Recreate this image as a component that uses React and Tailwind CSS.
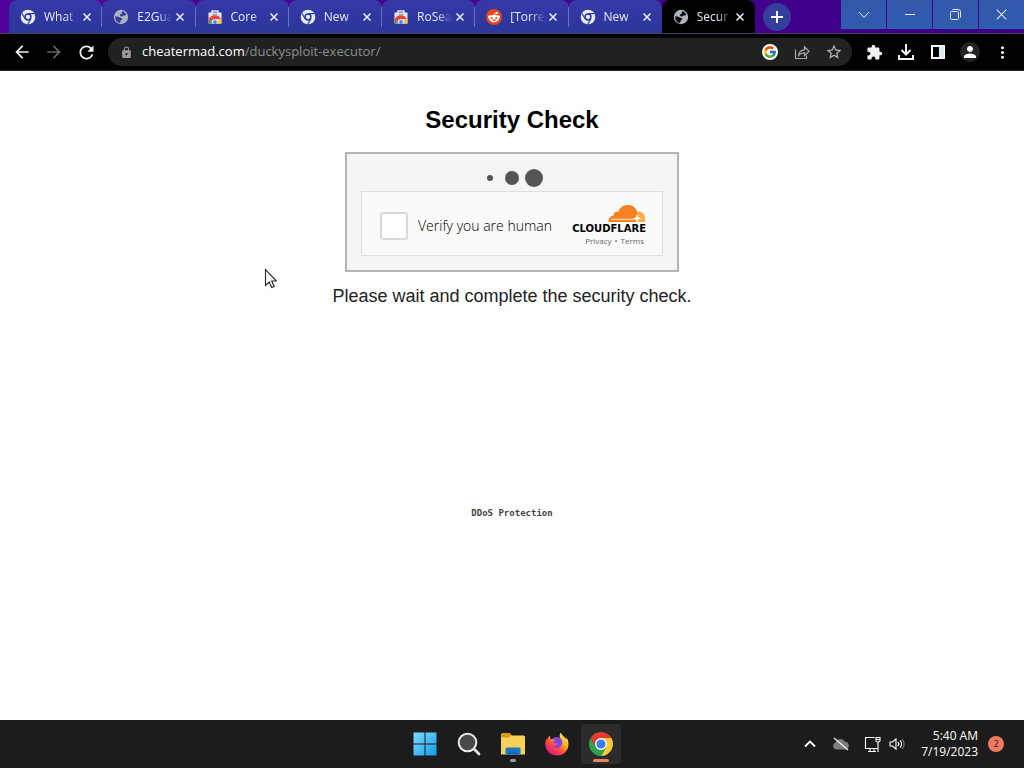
import React from "react";
import { FaRedditAlien } from "react-icons/fa6";
import { FcGoogle } from "react-icons/fc";
import {
  MdArrowBack,
  MdArrowForward,
  MdExtension,
  MdLock,
  MdMoreVert,
  MdPerson,
  MdRefresh,
  MdStarBorder,
} from "react-icons/md";

const UI = "font-['Open_Sans','Noto_Sans',sans-serif]";

function StoreIcon() {
  return (
    <svg width="16" height="16" viewBox="0 0 16 16">
      <path d="M5 4.500V2h6v2.500" fill="none" stroke="#dfe5f2" strokeWidth="1.500" />
      <path d="M1.500 3.500h13v11h-13z" fill="#e6e9f0" />
      <path d="M4 14.500V12a4 4 0 0 1 8 0v2.500z" fill="#f4f4f4" />
      <path d="M1.500 14.500V12A6.500 6.500 0 0 1 14 10.300H8A3.500 3.500 0 0 0 4.600 12z" fill="#e5483a" />
      <path d="M1.500 12.500v2h4L4 11z" fill="#43a563" />
      <path d="M14.500 11v3.500H10L11.500 11z" fill="#fbc02d" />
      <circle cx="8" cy="13" r="1.900" fill="#4285f4" />
      <path d="M5.500 5.500h5" stroke="#8f9cb8" />
    </svg>
  );
}

function ChromeMark() {
  return (
    <svg width="16" height="16" viewBox="0 0 16 16">
      <circle cx="8" cy="8" r="7.300" fill="#e6ecfc" />
      <path d="M8 4.600h6.500M5 9.700L1.900 4.300M11 9.700L7.800 15" stroke="#3038a0" strokeWidth="1.200" />
      <circle cx="8" cy="8" r="2.900" fill="#e6ecfc" stroke="#3038a0" strokeWidth="1.500" />
    </svg>
  );
}

function GlobeMark({ dark }) {
  const land = dark ? "#08080a" : "#343ba0";
  return (
    <svg width="16" height="16" viewBox="0 0 16 16">
      <circle cx="8" cy="8" r="7.200" fill="#adb2bd" />
      <path
        d="M9 2.200c1.300.2 3.600 1.600 4.300 3.500-1 .9-2.600.4-3.500 1.300-.9.800-2.300.5-2.800-.4-.4-.9.400-1.500 1.300-1.700.9-.3.500-1.800.7-2.700z"
        fill={land}
      />
      <path
        d="M2.200 7.200c1.700.2 2.900.3 3.900 1.100.8.700 2.300.300 2.900 1.300.5 1-.7 1.600-1.300 2.200-.5.600-.2 1.500-.9 2.200C4 13.300 2 11 2.200 7.200z"
        fill={land}
      />
    </svg>
  );
}

function TabIcon({ kind, dark }) {
  if (kind === "chrome") return <ChromeMark />;
  if (kind === "globe") return <GlobeMark dark={dark} />;
  if (kind === "store") return <StoreIcon />;
  return (
    <span className="flex size-4 items-center justify-center rounded-full bg-[#f0441c]">
      <FaRedditAlien size={12} className="text-white" />
    </span>
  );
}

function Cross({ size = 8, width = 1.5 }) {
  return (
    <svg width={size} height={size} viewBox="0 0 8 8" aria-hidden="true">
      <path d="M.5.5l7 7M7.500.5l-7 7" stroke="currentColor" strokeWidth={width} />
    </svg>
  );
}

const tabs = [
  { title: "What", icon: "chrome" },
  { title: "E2Gua", icon: "globe" },
  { title: "Core", icon: "store" },
  { title: "New", icon: "chrome" },
  { title: "RoSea", icon: "store" },
  { title: "[Torre", icon: "reddit" },
  { title: "New", icon: "chrome" },
  { title: "Secur", icon: "globe", active: true },
];

function Tab({ title, icon, active, divider }) {
  return (
    <div
      className={
        "flex h-full min-w-0 flex-1 items-center rounded-t-lg " +
        (active ? "bg-black" : "bg-linear-to-b from-[#3638a8] to-[#2b3799]")
      }
    >
      <button role="tab" aria-selected={!!active} className="flex items-center pl-[11px]">
        <span className="flex w-4 shrink-0 justify-center">
          <TabIcon kind={icon} dark={active} />
        </span>
        <span className="ml-2 w-[35px] text-left text-xs whitespace-nowrap text-[#e6eafa] mask-r-from-60%">
          {title}
        </span>
      </button>
      <button aria-label={"Close " + title} className="flex size-4 shrink-0 items-center justify-center text-[#eef1fc]">
        <Cross />
      </button>
      {divider && <span className="ml-auto h-5 w-px bg-[#6670c4]" />}
    </div>
  );
}

function WindowButton({ label, children }) {
  return (
    <button aria-label={label} className="flex h-[29px] w-[45px] items-center justify-center bg-linear-to-b from-[#3457ac] to-[#2e5cae] text-[#dfe8fb]">
      {children}
    </button>
  );
}

function TabStrip() {
  return (
    <div className="flex h-[34px] items-start border-b border-[#45405c] bg-linear-to-r from-[#51009a] to-[#3c0085]">
      <div role="tablist" className="ml-[9px] flex h-full w-[746px] min-w-0">
        {tabs.map((t, i) => (
          <Tab key={i} {...t} divider={i < 6} />
        ))}
      </div>
      <button aria-label="New tab" className="mt-[3px] ml-2 flex size-7 shrink-0 items-center justify-center rounded-full bg-[#343e9f]">
        <svg width="12" height="12" viewBox="0 0 12 12">
          <path d="M6 0v12M0 6h12" stroke="#fff" strokeWidth="2" />
        </svg>
      </button>
      <div className="ml-auto flex gap-px">
        <WindowButton label="Search tabs">
          <svg width="12" height="8" viewBox="0 0 12 8" fill="none" stroke="currentColor">
            <path d="M1 1l5 5.500L11 1" />
          </svg>
        </WindowButton>
        <WindowButton label="Minimize">
          <svg width="10" height="3" viewBox="0 0 10 3">
            <path d="M0 1.500h10" stroke="currentColor" />
          </svg>
        </WindowButton>
        <WindowButton label="Restore">
          <svg width="11" height="11" viewBox="0 0 11 11" fill="none" stroke="currentColor">
            <rect x=".5" y="2.500" width="8" height="8" rx="1" />
            <path d="M2.500.5h6a2 2 0 0 1 2 2v6" />
          </svg>
        </WindowButton>
        <WindowButton label="Close window">
          <Cross size={11} width={0.8} />
        </WindowButton>
      </div>
    </div>
  );
}

function IconButton({ label, tone = "text-[#f1f1f1]", children }) {
  return (
    <button aria-label={label} className={"flex w-8 shrink-0 items-center justify-center " + tone}>
      {children}
    </button>
  );
}

function Toolbar() {
  return (
    <div className="flex h-[37px] items-center border-b border-[#2c2828] bg-black pr-1.5 pl-1.5">
      <IconButton label="Back"><MdArrowBack size={20} /></IconButton>
      <IconButton label="Forward" tone="text-[#666666]"><MdArrowForward size={20} /></IconButton>
      <IconButton label="Reload"><MdRefresh size={21} /></IconButton>
      <div className="ml-1.5 flex h-7 min-w-0 flex-1 items-center rounded-full bg-[#202221] pr-0.5 pl-3">
        <MdLock size={13} className="shrink-0 text-[#9a9b9b]" />
        <label className="ml-[9px] flex min-w-0 flex-1 text-[13px] whitespace-nowrap">
          <span className="text-white">cheatermad.com</span>
          <input aria-label="Address path" className="min-w-0 flex-1 bg-transparent text-[#8c8e8d] outline-none" defaultValue="/duckysploit-executor/" />
        </label>
        <IconButton label="Search with Google">
          <span className="flex size-4 items-center justify-center rounded-full bg-white"><FcGoogle size={14} /></span>
        </IconButton>
        <IconButton label="Share">
          <svg width="16" height="15" viewBox="0 0 16 15" fill="none" stroke="#a9abaa" strokeWidth="1.200">
            <path d="M1.500 4.500v9h11v-3M4.500 10.500C4.800 7 7 5 10.500 4.800V2L15 6.300l-4.500 4.200V7.800C7.500 7.800 6 8.500 4.500 10.500z" />
          </svg>
        </IconButton>
        <IconButton label="Bookmark" tone="text-[#b7b9b8]"><MdStarBorder size={18} /></IconButton>
      </div>
      <div className="ml-1.5 flex">
        <IconButton label="Extensions"><MdExtension size={17} /></IconButton>
        <IconButton label="Downloads">
          <svg width="18" height="18" viewBox="0 0 18 18" fill="none" stroke="currentColor" strokeWidth="2">
            <path d="M9 1v10M4.500 7L9 11.500 13.500 7M2 12v4h14v-4" />
          </svg>
        </IconButton>
        <IconButton label="Side panel">
          <svg width="14" height="14" viewBox="0 0 14 14">
            <path d="M1 1h12v12H1z" fill="none" stroke="#fff" strokeWidth="2" />
            <path d="M8 1h5v12H8z" fill="#dfeaf0" />
          </svg>
        </IconButton>
        <IconButton label="Profile">
          <span className="flex size-5 items-center justify-center rounded-full bg-[#242424]"><MdPerson size={18} className="text-white" /></span>
        </IconButton>
        <IconButton label="Menu"><MdMoreVert size={19} /></IconButton>
      </div>
    </div>
  );
}

function CloudLogo() {
  return (
    <svg width="38" height="18" viewBox="0 0 38 18" aria-hidden="true">
      <path d="M30 6.500c4.500-.4 7.500 3.500 7.200 8.500 0 1.500-.2 2-.7 2H20z" fill="#fbad41" />
      <path d="M.6 17c-.4-3.500 1.500-6.200 5-6.600C5.200 7.600 7.600 6 10.200 7 11.700 2.600 15.500 0 19.800 0c5 0 8.800 3.200 9.800 8l-1.700 7c-.4 1.500-1 2-2.500 2z" fill="#f6821f" />
      <path d="M3 14.300h22.500c1.600 0 2.700-1 3-2.500" fill="none" stroke="#fff" strokeWidth=".8" />
      <path d="M29 9l1.100 3.300 3.300 1.200-3.300 1.100L29 18l-1.100-3.400-3.300-1.100 3.300-1.200z" fill="#fff" />
    </svg>
  );
}

function SecurityPage() {
  return (
    <main className="flex flex-1 flex-col items-center bg-white font-['Liberation_Sans',Arial,sans-serif]">
      <h1 className="mt-[33px] text-2xl font-bold text-black">Security Check</h1>
      <section className="mt-4 flex w-[334px] flex-col border-2 border-[#b5b5b5] bg-[#f5f5f5] px-3.5 pb-3.5">
        <div role="status" aria-label="Loading" className="flex h-[37px] items-end justify-center pb-[3px]">
          <svg width="60" height="20" viewBox="0 0 60 20" fill="#555555" className="ml-1">
            <circle cx="6" cy="10" r="3" />
            <circle cx="28" cy="10" r="7" />
            <circle cx="50" cy="10" r="9" />
          </svg>
        </div>
        <div className={"flex h-[65px] items-center border border-[#dedede] bg-[#fafafa] pt-1 pr-4 pl-[18px] " + UI}>
          <label className="flex items-center gap-2.5 text-sm font-light whitespace-nowrap text-black">
            <input type="checkbox" className="size-7 appearance-none rounded-[3px] border-2 border-[#dadada] bg-white" />
            Verify you are human
          </label>
          <div className="ml-auto flex flex-col items-end">
            <CloudLogo />
            <span className="mt-px font-['DejaVu_Sans',sans-serif] text-[10px] leading-[10px] font-bold text-black">CLOUDFLARE</span>
            <div className="mt-0.5 flex gap-[3px] pr-0.5 text-[8px] leading-[10px] text-[#666666]">
              <a href="#privacy">Privacy</a>
              <span>•</span>
              <a href="#terms">Terms</a>
            </div>
          </div>
        </div>
      </section>
      <p className="mt-2.5 text-lg text-[#222222]">Please wait and complete the security check.</p>
      <p className="mt-[195px] font-['DejaVu_Sans_Mono',monospace] text-[9px] leading-4 font-bold text-[#444444]">DDoS Protection</p>
    </main>
  );
}

function TaskButton({ label, active, bar, children }) {
  return (
    <button aria-label={label} className={"relative flex size-10 items-center justify-center rounded " + (active ? "bg-[#2b2b2b]" : "")}>
      {children}
      {bar && <span className={"absolute bottom-0.5 h-[3px] rounded-full " + bar} />}
    </button>
  );
}

function Taskbar() {
  return (
    <footer className={"grid h-12 grid-cols-[1fr_auto_1fr] items-center bg-[#1c1c1c] " + UI}>
      <nav aria-label="Apps" className="col-start-2 flex gap-1 pl-0.5">
        <TaskButton label="Start">
          <svg width="24" height="24" viewBox="0 0 24 24">
            <defs>
              <linearGradient id="win" x1="0" y1="0" x2="1" y2="1">
                <stop offset="0" stopColor="#7fdcfb" />
                <stop offset="1" stopColor="#129cec" />
              </linearGradient>
            </defs>
            <path d="M.5.5h11v11H.5zM12.500.5h11v11h-11zM.5 12.500h11v11H.5zM12.500 12.500h11v11h-11z" fill="url(#win)" />
          </svg>
        </TaskButton>
        <TaskButton label="Search">
          <svg width="24" height="24" viewBox="0 0 24 24">
            <path d="M17 17l5 5" stroke="#e3e3e3" strokeWidth="2.800" strokeLinecap="round" />
            <circle cx="10.500" cy="10.500" r="8.800" fill="#494949" stroke="#e8e8e8" strokeWidth="2" />
          </svg>
        </TaskButton>
        <TaskButton label="File Explorer" bar="w-1.5 bg-[#9b9b9b]">
          <svg width="26" height="24" viewBox="0 0 26 24">
            <path d="M1 2.500Q1 1 2.500 1H9q1 0 1.500.8L12 4v6H1z" fill="#d99a1c" />
            <path d="M1 5.500h8l2-2h12.500q1.500 0 1.500 1.500v17.500H1z" fill="#fad158" />
            <path d="M5.500 22.500V17q0-1.500 1.500-1.500h12q1.500 0 1.500 1.500v5.500z" fill="#1a78cb" />
            <path d="M8 22.500v-2q0-1 1-1h8q1 0 1 1v2z" fill="#1565b4" />
          </svg>
        </TaskButton>
        <TaskButton label="Firefox">
          <svg width="24" height="24" viewBox="0 0 24 24">
            <defs>
              <linearGradient id="fox" x1=".85" y1=".1" x2=".2" y2=".9">
                <stop offset="0" stopColor="#fff04a" />
                <stop offset=".35" stopColor="#ffa82a" />
                <stop offset=".65" stopColor="#ff4d3f" />
                <stop offset="1" stopColor="#e4157e" />
              </linearGradient>
            </defs>
            <circle cx="12" cy="13" r="8" fill="#8542dc" />
            <path d="M16 .5c-1.800 2-1.800 4.500 0 6.500 2 2.300 1.800 5-.2 7.200-2.800 2.800-7 1.500-8.300-1 2.300.9 4-.2 5.100-1.200-1.100-.8-2.600-1-4.100-.8-.5-1.600.5-2.500 2-2.900-1.300-1-2.800-1.100-4.200-.8C5.100 6.500 5 5 5.300 3.500 3.500 4.600 2.500 6.200 2 8l-.6-1.500C0 9.500 0 13 .8 15.500 2.400 20.500 7 23.500 12 23.500c6.500 0 11.500-5 11.500-11.300 0-2.700-.8-5.400-2.300-7.200.3 1.300.3 2 .2 2.800C20.500 5 16.500 3.500 16 .5z" fill="url(#fox)" />
          </svg>
        </TaskButton>
        <TaskButton label="Chrome" active bar="w-4 bg-[#e98265]">
          <svg width="24" height="24" viewBox="0 0 24 24">
            <path d="M12 6h10.390A12 12 0 0 0 1.610 6L6.800 15z" fill="#e33b2e" />
            <path d="M17.200 15L12 24A12 12 0 0 0 22.390 6H12z" fill="#fcc934" />
            <path d="M6.800 15L1.610 6A12 12 0 0 0 12 24l5.200-9z" fill="#2fa24f" />
            <circle cx="12" cy="12" r="6" fill="#fff" />
            <circle cx="12" cy="12" r="4.600" fill="#3b7ded" />
          </svg>
        </TaskButton>
      </nav>
      <div className="col-start-3 flex items-center justify-end pr-5 text-white">
        <button aria-label="Hidden icons" className="mr-4">
          <svg width="12" height="8" viewBox="0 0 12 8" fill="none" stroke="currentColor" strokeWidth="1.800">
            <path d="M1 6.500l5-5 5 5" />
          </svg>
        </button>
        <button aria-label="OneDrive" className="mr-3.5">
          <svg width="18" height="14" viewBox="0 0 18 14">
            <path d="M4.500 12.500a3.500 3.500 0 0 1-.6-6.900 4.800 4.800 0 0 1 9-.8 3.900 3.900 0 0 1 .9 7.700z" fill="#7d7d7d" />
            <path d="M2 1l14 12" stroke="#f2f2f2" strokeWidth="1.200" />
          </svg>
        </button>
        <button aria-label="Network" className="mr-2">
          <svg width="17" height="17" viewBox="0 0 17 17" fill="none" stroke="currentColor" strokeWidth="1.100">
            <path d="M10.500 1.500h-9v11h12M4 15.500h8M6 12.500v3M10 12.500v3M14 6v10M12 1.500h4v3q0 1.500-1.500 1.500h-1Q12 6 12 4.500zM12 3.500h4" />
          </svg>
        </button>
        <button aria-label="Volume" className="mr-4">
          <svg width="16" height="14" viewBox="0 0 16 14" fill="none" stroke="currentColor" strokeWidth="1.100">
            <path d="M1 5v4h2.500L7 12V2L3.500 5zM9 5a3 3 0 0 1 0 4M11 3.300a5.200 5.200 0 0 1 0 7.400" />
            <path d="M13 1.800a7.500 7.500 0 0 1 0 10.400" stroke="#777" />
          </svg>
        </button>
        <div className="text-right text-xs">
          <div>5:40 AM</div>
          <div>7/19/2023</div>
        </div>
        <button aria-label="2 notifications" className="ml-2.5 flex size-4 items-center justify-center rounded-full bg-[#f17a60] text-[9px] text-[#2a1713]">2</button>
      </div>
    </footer>
  );
}

export default function App() {
  return (
    <div className="relative flex min-h-screen flex-col overflow-hidden bg-white">
      <header className={UI}>
        <TabStrip />
        <Toolbar />
      </header>
      <SecurityPage />
      <Taskbar />
      <svg className="absolute top-[268px] left-[264px]" width="13" height="21" viewBox="0 0 13 21" aria-hidden="true">
        <path d="M1.500 1.500v16l3.700-3.500 2.500 5.500 2.500-1.100-2.500-5.400h4.800z" fill="#fff" stroke="#222" strokeWidth="1.100" />
      </svg>
    </div>
  );
}
